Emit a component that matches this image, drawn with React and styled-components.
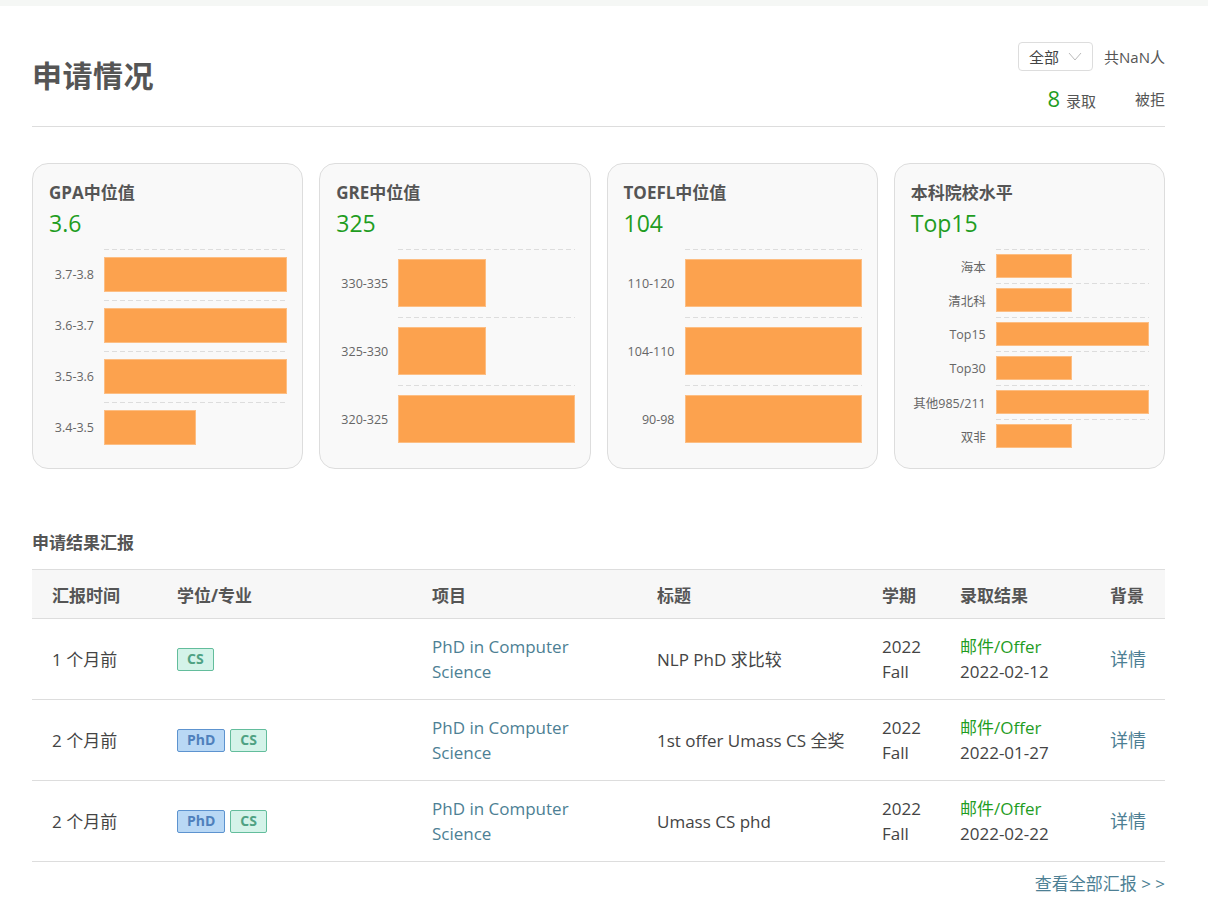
import styled, { createGlobalStyle } from 'styled-components';

const GlobalStyle = createGlobalStyle`
    body {
        margin: 0;
        background: #fff;
        font-family: "Open Sans", "Noto Sans CJK SC", sans-serif;
        color: #555;
    }
`;

const TopBand = styled.div`
    height: 6px;
    background: #f5f7f5;
`;

const Page = styled.main`
    padding: 0 43px 0 32px;
`;

const Header = styled.header`
    display: flex;
    align-items: center;
    justify-content: space-between;
    padding: 36px 0 16px;
    border-bottom: 1px solid #ddd;
`;

const Title = styled.h1`
    margin: 0;
    font-size: 30px;
    line-height: 40px;
    font-weight: 700;
    color: #555;
    letter-spacing: 0.5px;
`;

const Summary = styled.div`
    display: flex;
    flex-direction: column;
    align-items: flex-end;
    gap: 15px;
    font-size: 15px;
    color: #555;
`;

const SummaryRow = styled.div`
    display: flex;
    align-items: center;
    gap: 11px;
    height: ${props => props.h}px;
`;

const Select = styled.div`
    display: flex;
    align-items: center;
    justify-content: space-between;
    box-sizing: border-box;
    width: 75px;
    height: 29px;
    padding: 0 10px;
    border: 1px solid #ddd;
    border-radius: 4px;
    color: #444;
`;

const Count = styled.span`
    display: flex;
    align-items: baseline;
    gap: 6px;
    margin-right: 28px;
`;

const BigNum = styled.span`
    font-size: 22px;
    line-height: 24px;
    color: #1f9d1f;
`;

const Cards = styled.section`
    display: grid;
    grid-template-columns: repeat(4, 1fr);
    gap: 16px;
    margin-top: 36px;
`;

const Card = styled.article`
    box-sizing: border-box;
    height: 306px;
    padding: 17px 15px 15px 16px;
    border: 1px solid #ddd;
    border-radius: 16px;
    background: #f9f9f9;
`;

const CardTitle = styled.h3`
    margin: 0;
    font-size: 17px;
    line-height: 24px;
    font-weight: 700;
    color: #555;
`;

const CardValue = styled.div`
    font-size: 23px;
    line-height: 30px;
    color: #1f9d1f;
    margin: 3px 0 11px;
`;

const Chart = styled.div`
    display: grid;
    grid-template-columns: ${props => props.labelWidth}px 1fr;
    grid-auto-rows: ${props => 204 / props.rows}px;
    column-gap: 10px;
`;

const AxisLabel = styled.div`
    display: flex;
    align-items: center;
    justify-content: flex-end;
    font-size: 12.5px;
    color: #666;
    white-space: nowrap;
`;

const BarTrack = styled.div`
    display: flex;
    align-items: center;
    background-image: linear-gradient(to right, #ddd 0 5px, transparent 5px 8px);
    background-size: 8px 1px;
    background-repeat: repeat-x;
    background-position: 0 0;
`;

const Bar = styled.div`
    height: 70%;
    background: #fca24e;
    box-shadow: inset 0 0 0 1px rgba(255, 255, 255, 0.3);
`;

const SectionTitle = styled.h2`
    margin: 62px 0 14px;
    font-size: 17px;
    line-height: 24px;
    font-weight: 700;
    color: #555;
`;

const Table = styled.table`
    width: 100%;
    table-layout: fixed;
    border-collapse: collapse;
    border-top: 1px solid #ddd;
    font-size: 17px;
    color: #444;
`;

const Col = styled.col`
    width: ${props => props.w}px;
`;

const Th = styled.th`
    height: 48px;
    padding: 0 20px;
    text-align: left;
    font-weight: 700;
    color: #555;
    background: #f7f7f7;
    border-bottom: 1px solid #ddd;
    white-space: nowrap;
`;

const Td = styled.td`
    height: 80px;
    padding: 0 20px;
    line-height: 25px;
    vertical-align: middle;
    border-bottom: 1px solid #ddd;
    color: ${props => props.color || '#444'};
    font-size: ${props => props.size || '17px'};
    white-space: ${props => props.nowrap ? 'nowrap' : 'normal'};
`;

const Tags = styled.div`
    display: flex;
    gap: 5px;
`;

const Tag = styled.span`
    display: inline-flex;
    align-items: center;
    justify-content: center;
    box-sizing: border-box;
    height: 23px;
    padding: 0 9px;
    border-radius: 2px;
    font-size: 14px;
    font-weight: 700;
    line-height: 1;
    border: 1px solid ${props => props.kind === 'phd' ? '#5d93cf' : '#63bd9c'};
    background: ${props => props.kind === 'phd' ? '#b9d8f5' : '#d4f3e9'};
    color: ${props => props.kind === 'phd' ? '#4f80bc' : '#4fa283'};
`;

const Block = styled.div`
    color: ${props => props.color || 'inherit'};
`;

const Footer = styled.div`
    display: flex;
    justify-content: flex-end;
    padding: 8px 0;
    font-size: 17px;
    color: #4d7f94;
    white-space: pre;
`;

const cards = [
    { title: 'GPA中位值', value: '3.6', labelWidth: 45, bars: [['3.7-3.8', 100], ['3.6-3.7', 100], ['3.5-3.6', 100], ['3.4-3.5', 50]] },
    { title: 'GRE中位值', value: '325', labelWidth: 52, bars: [['330-335', 50], ['325-330', 50], ['320-325', 100]] },
    { title: 'TOEFL中位值', value: '104', labelWidth: 51, bars: [['110-120', 100], ['104-110', 100], ['90-98', 100]] },
    { title: '本科院校水平', value: 'Top15', labelWidth: 75, bars: [['海本', 50], ['清北科', 50], ['Top15', 100], ['Top30', 50], ['其他985/211', 100], ['双非', 50]] },
];

const columns = [
    ['汇报时间', 125], ['学位/专业', 255], ['项目', 225], ['标题', 225],
    ['学期', 78], ['录取结果', 150], ['背景', 75],
];

const reports = [
    { time: '1 个月前', tags: ['cs'], title: 'NLP PhD 求比较', date: '2022-02-12' },
    { time: '2 个月前', tags: ['phd', 'cs'], title: '1st offer Umass CS 全奖', date: '2022-01-27' },
    { time: '2 个月前', tags: ['phd', 'cs'], title: 'Umass CS phd', date: '2022-02-22' },
];

function StatCard({ title, value, labelWidth, bars }) {
    return (
        <Card>
            <CardTitle>{title}</CardTitle>
            <CardValue>{value}</CardValue>
            <Chart labelWidth={labelWidth} rows={bars.length}>
                {bars.flatMap(([label, pct]) => [
                    <AxisLabel key={label + '-l'}>{label}</AxisLabel>,
                    <BarTrack key={label + '-b'}>
                        <Bar style={{ width: pct + '%' }} />
                    </BarTrack>,
                ])}
            </Chart>
        </Card>
    );
}

export default function App() {
    return (
        <>
            <GlobalStyle />
            <TopBand />
            <Page>
                <Header>
                    <Title>申请情况</Title>
                    <Summary>
                        <SummaryRow h={29}>
                            <Select>
                                全部
                                <svg width="14" height="9" viewBox="0 0 14 9">
                                    <polyline points="1,1 7,8 13,1" fill="none" stroke="#bbb" strokeWidth="1" />
                                </svg>
                            </Select>
                            <span>共NaN人</span>
                        </SummaryRow>
                        <SummaryRow h={24}>
                            <Count><BigNum>8</BigNum>录取</Count>
                            <span>被拒</span>
                        </SummaryRow>
                    </Summary>
                </Header>

                <Cards>
                    {cards.map(c => <StatCard key={c.title} {...c} />)}
                </Cards>

                <SectionTitle>申请结果汇报</SectionTitle>
                <Table>
                    <colgroup>
                        {columns.map(([name, w]) => <Col key={name} w={w} />)}
                    </colgroup>
                    <thead>
                        <tr>
                            {columns.map(([name]) => <Th key={name}>{name}</Th>)}
                        </tr>
                    </thead>
                    <tbody>
                        {reports.map((r, i) => (
                            <tr key={i}>
                                <Td>{r.time}</Td>
                                <Td>
                                    <Tags>
                                        {r.tags.map(t => <Tag key={t} kind={t}>{t === 'phd' ? 'PhD' : 'CS'}</Tag>)}
                                    </Tags>
                                </Td>
                                <Td color="#4d7f94">PhD in Computer Science</Td>
                                <Td nowrap>{r.title}</Td>
                                <Td>2022 Fall</Td>
                                <Td nowrap>
                                    <Block color="#1f9d1f">邮件/Offer</Block>
                                    <Block>{r.date}</Block>
                                </Td>
                                <Td color="#4d7f94" size="18px" nowrap>详情</Td>
                            </tr>
                        ))}
                    </tbody>
                </Table>
                <Footer>{'查看全部汇报 > >'}</Footer>
            </Page>
        </>
    );
}
